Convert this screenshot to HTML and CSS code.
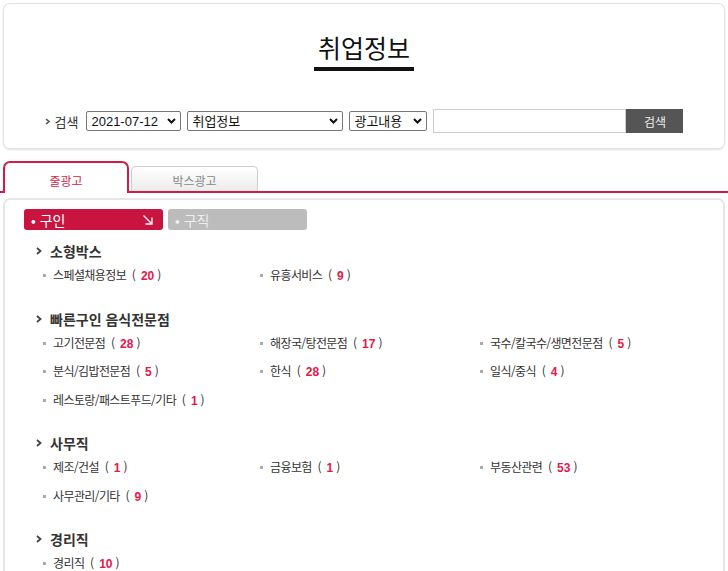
FILE: index.html
```html
<!DOCTYPE html>
<html lang="ko">
<head>
    <meta charset="UTF-8" />
    <meta name="viewport" content="width=device-width, initial-scale=1.0" />
    <title>취업정보</title>
    <link rel="stylesheet" href="styles.css">
</head>
<body>
    <div class="top-box">
        <h1 class="title">취업정보</h1>
        <div class="title-bar"></div>
        <form class="search-row" onsubmit="return false;">
            <span class="search-label">
                <svg width="5" height="7" viewBox="0 0 5 7"><path d="M1 1 L4 3.5 L1 6" fill="none" stroke="#555" stroke-width="1.6"/></svg>
                검색
            </span>
            <span class="sel sel-date">
                <select><option>2021-07-12</option></select>
                <svg class="caret" width="9" height="6" viewBox="0 0 9 6"><path d="M1 1 L4.5 4.5 L8 1" fill="none" stroke="#111" stroke-width="2"/></svg>
            </span>
            <span class="sel sel-cat">
                <select><option>취업정보</option></select>
                <svg class="caret" width="9" height="6" viewBox="0 0 9 6"><path d="M1 1 L4.5 4.5 L8 1" fill="none" stroke="#111" stroke-width="2"/></svg>
            </span>
            <span class="sel sel-field">
                <select><option>광고내용</option></select>
                <svg class="caret" width="9" height="6" viewBox="0 0 9 6"><path d="M1 1 L4.5 4.5 L8 1" fill="none" stroke="#111" stroke-width="2"/></svg>
            </span>
            <input type="text" class="keyword" />
            <button class="search-btn">검색</button>
        </form>
    </div>

    <ul class="tabs">
        <li class="tab active">줄광고</li>
        <li class="tab">박스광고</li>
    </ul>

    <div class="content-box">
        <div class="kind-tabs">
            <div class="kind on">
                <span>• 구인</span>
                <svg width="12" height="12" viewBox="0 0 12 12"><path d="M1.5 1.5 L10 10 M3.5 10 H10 V3.5" fill="none" stroke="#fff" stroke-width="1.3"/></svg>
            </div>
            <div class="kind off"><span>• 구직</span></div>
        </div>

        <div class="section">
            <h2 class="sec-title"><svg width="6" height="8" viewBox="0 0 6 8"><path d="M1 1 L4.5 4 L1 7" fill="none" stroke="#444" stroke-width="1.8"/></svg>소형박스</h2>
            <ul class="items">
                <li>스페셜채용정보 <b>(<em>20</em>)</b></li>
                <li>유흥서비스 <b>(<em>9</em>)</b></li>
            </ul>
        </div>

        <div class="section">
            <h2 class="sec-title"><svg width="6" height="8" viewBox="0 0 6 8"><path d="M1 1 L4.5 4 L1 7" fill="none" stroke="#444" stroke-width="1.8"/></svg>빠른구인 음식전문점</h2>
            <ul class="items">
                <li>고기전문점 <b>(<em>28</em>)</b></li>
                <li>해장국/탕전문점 <b>(<em>17</em>)</b></li>
                <li>국수/칼국수/생면전문점 <b>(<em>5</em>)</b></li>
                <li>분식/김밥전문점 <b>(<em>5</em>)</b></li>
                <li>한식 <b>(<em>28</em>)</b></li>
                <li>일식/중식 <b>(<em>4</em>)</b></li>
                <li>레스토랑/패스트푸드/기타 <b>(<em>1</em>)</b></li>
            </ul>
        </div>

        <div class="section">
            <h2 class="sec-title"><svg width="6" height="8" viewBox="0 0 6 8"><path d="M1 1 L4.5 4 L1 7" fill="none" stroke="#444" stroke-width="1.8"/></svg>사무직</h2>
            <ul class="items">
                <li>제조/건설 <b>(<em>1</em>)</b></li>
                <li>금융보험 <b>(<em>1</em>)</b></li>
                <li>부동산관련 <b>(<em>53</em>)</b></li>
                <li>사무관리/기타 <b>(<em>9</em>)</b></li>
            </ul>
        </div>

        <div class="section">
            <h2 class="sec-title"><svg width="6" height="8" viewBox="0 0 6 8"><path d="M1 1 L4.5 4 L1 7" fill="none" stroke="#444" stroke-width="1.8"/></svg>경리직</h2>
            <ul class="items">
                <li>경리직 <b>(<em>10</em>)</b></li>
            </ul>
        </div>
    </div>
</body>
</html>
```

FILE: styles.css
```css
body {
    margin: 0;
    font-family: "Noto Sans CJK KR", "Noto Sans", sans-serif;
    color: #333;
    background: #fff;
}
.top-box {
    margin: 3px 3px 0;
    height: 146px;
    box-sizing: border-box;
    border: 1px solid #e2e2e2;
    border-radius: 7px;
    box-shadow: 0 1px 2px rgba(0, 0, 0, 0.12);
    padding-top: 28px;
    display: flex;
    flex-direction: column;
    align-items: center;
}
.title {
    margin: 0;
    font-size: 25px;
    font-weight: 400;
    line-height: 31px;
    color: #111;
}
.title-bar {
    width: 100px;
    height: 4px;
    background: #111;
    margin-top: 4px;
}
.search-row {
    margin: 38px 0 0;
    display: flex;
    align-items: center;
    gap: 6px;
    font-size: 13px;
}
.search-label {
    display: flex;
    align-items: center;
    gap: 5px;
    color: #333;
    margin-right: 2px;
}
.sel {
    position: relative;
    display: inline-block;
}
.sel select {
    appearance: none;
    -webkit-appearance: none;
    height: 20px;
    box-sizing: border-box;
    border: 1px solid #777;
    border-radius: 2px;
    background: #fff;
    padding: 0 0 0 4px;
    font-family: "Liberation Sans", "Noto Sans CJK KR", sans-serif;
    font-size: 13px;
    color: #111;
    display: block;
}
.sel-date select { width: 95px; }
.sel-cat select { width: 156px; }
.sel-field select { width: 78px; }
.caret {
    position: absolute;
    right: 5px;
    top: 7px;
}
.keyword {
    width: 193px;
    height: 24px;
    box-sizing: border-box;
    border: 1px solid #ccc;
    margin: 0;
}
.search-btn {
    width: 57px;
    height: 24px;
    margin-left: -6px;
    border: none;
    background: #555;
    color: #eee;
    font-family: "Noto Sans CJK KR", sans-serif;
    font-size: 12px;
    padding: 0;
}
.tabs {
    list-style: none;
    margin: 12px 0 0;
    padding: 0 0 0 3px;
    display: flex;
    align-items: flex-end;
    gap: 2px;
    border-bottom: 2px solid #d31c44;
}
.tab {
    box-sizing: border-box;
    width: 127px;
    height: 25px;
    border: 1px solid #ccc;
    border-bottom: none;
    border-radius: 5px 5px 0 0;
    background: linear-gradient(#fff, #ececec);
    color: #888;
    font-size: 12px;
    text-align: center;
    line-height: 27px;
}
.tab.active {
    width: 126px;
    height: 32px;
    margin-bottom: -2px;
    border: 2px solid #d31c44;
    border-bottom: none;
    border-radius: 7px 7px 0 0;
    background: #fff;
    color: #d5254e;
    line-height: 35px;
}
.content-box {
    margin: 5px 3px 0;
    border: 2px solid #e6e6e6;
    border-bottom: none;
    border-radius: 7px 7px 0 0;
    padding: 9px 0 10px;
    min-height: 380px;
}
.kind-tabs {
    display: flex;
    gap: 5px;
    padding-left: 19px;
}
.kind {
    box-sizing: border-box;
    width: 139px;
    height: 21px;
    border-radius: 3px;
    padding: 0 9px 0 7px;
    display: flex;
    align-items: center;
    justify-content: space-between;
    font-size: 14px;
    color: #fff;
}
.kind.on { background: #c9143f; }
.kind.off {
    background: #bcbcbc;
    color: #eee;
}
.section {
    margin-top: 19px;
}
.kind-tabs + .section {
    margin-top: 11px;
}
.sec-title {
    margin: 0;
    padding-left: 31px;
    height: 20px;
    display: flex;
    align-items: center;
    gap: 8px;
    font-size: 14px;
    font-weight: 700;
    color: #333;
}
.items {
    list-style: none;
    margin: 0;
    padding: 0 0 0 38px;
    display: grid;
    grid-template-columns: 217px 220px 1fr;
}
.items li {
    height: 28.5px;
    line-height: 28px;
    font-size: 12px;
    letter-spacing: -0.6px;
    color: #333;
    padding-left: 10px;
    position: relative;
}
.items li::before {
    content: "";
    position: absolute;
    left: 0;
    top: 13px;
    width: 3px;
    height: 3px;
    background: #aaa;
}
.items b {
    font-weight: 400;
    margin-left: 3px;
    letter-spacing: 4px;
}
.items em {
    font-style: normal;
    font-weight: 700;
    font-family: "Liberation Sans", sans-serif;
    color: #e8174a;
    letter-spacing: 0;
    margin: 0 3px 0 1px;
}
```
